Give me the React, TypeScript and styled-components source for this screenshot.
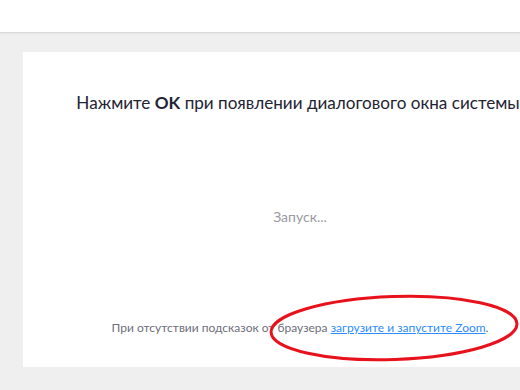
import styled, { createGlobalStyle } from 'styled-components';

const GlobalStyle = createGlobalStyle`
  html, body {
    margin: 0;
    padding: 0;
    background: #efefef;
    font-family: Lato, "Open Sans", sans-serif;
    overflow: hidden;
  }
`;

const Page = styled.div`
  width: 520px;
  height: 390px;
  overflow: hidden;
`;

const TopBar = styled.header`
  height: 32px;
  background: #ffffff;
  border-bottom: 1px solid #dadada;
  box-shadow: 0 1px 2px rgba(0, 0, 0, 0.04);
`;

const Card = styled.main`
  position: relative;
  display: flex;
  flex-direction: column;
  align-items: center;
  width: 554px;
  margin: 19px 0 0 23px;
  padding: 40px 0 31px;
  background: #ffffff;
  box-sizing: border-box;
`;

const Title = styled.h1`
  margin: 0 4px 0 0;
  font-size: 17.1px;
  line-height: 21px;
  font-weight: 400;
  color: #232333;
  white-space: nowrap;

  b {
    font-weight: 700;
  }
`;

const Status = styled.div`
  margin-top: 94px;
  font-size: 14px;
  line-height: 20px;
  color: #9a9aa3;
`;

const Hint = styled.p`
  margin: 93px 0 0;
  font-size: 12px;
  line-height: 16px;
  color: #6e6e7a;
  white-space: nowrap;

  a {
    color: #2d8cff;
    text-decoration: underline;
  }
`;

const Mark = styled.svg`
  position: absolute;
  left: 245px;
  top: 239px;
  pointer-events: none;
`;

const App = (): JSX.Element => (
  <Page>
    <GlobalStyle />
    <TopBar />
    <Card>
      <Title>
        Нажмите <b>OK</b> при появлении диалогового окна системы
      </Title>
      <Status>Запуск...</Status>
      <Hint>
        При отсутствии подсказок от браузера <a href="#">загрузите и запустите Zoom</a>.
      </Hint>
      {/* hand-drawn red annotation */}
      <Mark width="260" height="80" viewBox="0 0 260 80">
        <ellipse
          cx="126"
          cy="37"
          rx="123"
          ry="31.5"
          transform="rotate(-2 126 37)"
          fill="none"
          stroke="#e8121c"
          strokeWidth="3"
        />
      </Mark>
    </Card>
  </Page>
);

export default App;
